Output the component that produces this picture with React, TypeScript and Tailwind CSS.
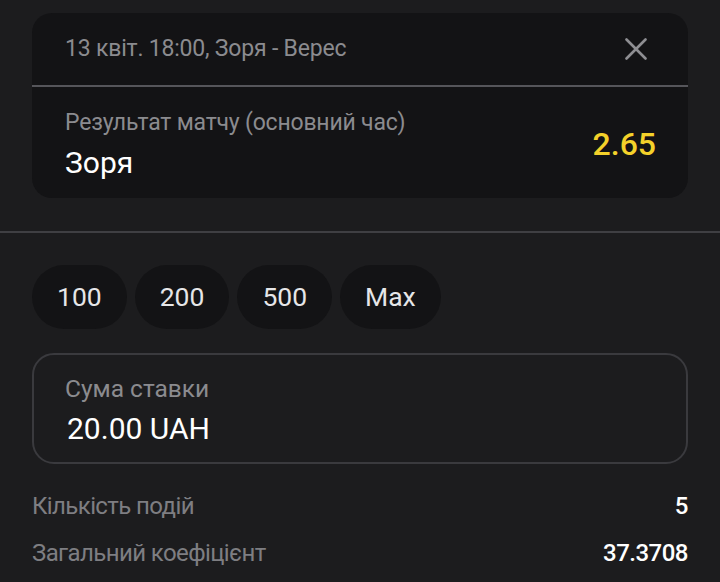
const stakes = ['100', '200', '500', 'Max']

const summary = [
  { label: 'Кількість подій', value: '5' },
  { label: 'Загальний коефіцієнт', value: '37.3708' },
]

export default function App() {
  return (
    <div className="w-[720px] h-[582px] overflow-hidden bg-[#1c1c1e] font-['Roboto',sans-serif]">
      {/* Bet card */}
      <div className="px-8 pt-[13px]">
        <div className="rounded-[20px] bg-[#131315] h-[185px] flex flex-col">
          <div className="h-[72px] pl-[33px] pr-[41px] flex items-center justify-between">
            <span className="text-[23px] text-[#8b8b8f] tracking-[-0.2px]">13 квіт. 18:00, Зоря - Верес</span>
            <svg width="22" height="22" viewBox="0 0 22 22" fill="none">
              <path d="M1.5 1.5L20.5 20.5M20.5 1.5L1.5 20.5" stroke="#8e8e92" strokeWidth="2.6" strokeLinecap="round" />
            </svg>
          </div>
          <div className="h-[2px] bg-[#55555a]" />
          <div className="flex-1 pl-[33px] pr-8 flex items-center justify-between">
            <div className="flex flex-col pt-[4px]">
              <span className="text-[23px] leading-[30px] text-[#8b8b8f] tracking-[-0.2px]">Результат матчу (основний час)</span>
              <span className="text-[30px] leading-[38px] text-white mt-[6px]">Зоря</span>
            </div>
            <span className="text-[32px] font-medium text-[#f4d12a] pt-[2px]">2.65</span>
          </div>
        </div>
      </div>

      <div className="h-[2px] bg-[#3f3f43] mt-[33px]" />

      {/* Quick stakes */}
      <div className="px-8 pt-[32px] flex gap-2">
        {stakes.map((s) => (
          <div
            key={s}
            className="h-[64px] px-[25px] rounded-full bg-[#131315] flex items-center text-[26.5px] text-[#e6e6e8]"
          >
            {s}
          </div>
        ))}
      </div>

      {/* Stake input */}
      <div className="px-8 pt-6">
        <div className="h-[111px] rounded-[22px] border-2 border-[#3a3a3e] px-[31px] pt-[4px] flex flex-col justify-center">
          <span className="text-[24.5px] leading-[30px] text-[#8b8b8f]">Сума ставки</span>
          <span className="text-[30px] leading-[38px] text-white mt-[6px] pl-[2px]">20.00 UAH</span>
        </div>
      </div>

      {/* Summary */}
      <div className="px-8 pt-[27px] flex flex-col gap-[17px]">
        {summary.map((r) => (
          <div key={r.label} className="flex items-center justify-between h-[30px]">
            <span className="text-[24px] text-[#7e7e82] tracking-[-0.6px]">{r.label}</span>
            <span className="text-[24px] font-medium text-white tracking-[-0.5px]">{r.value}</span>
          </div>
        ))}
      </div>
    </div>
  )
}
